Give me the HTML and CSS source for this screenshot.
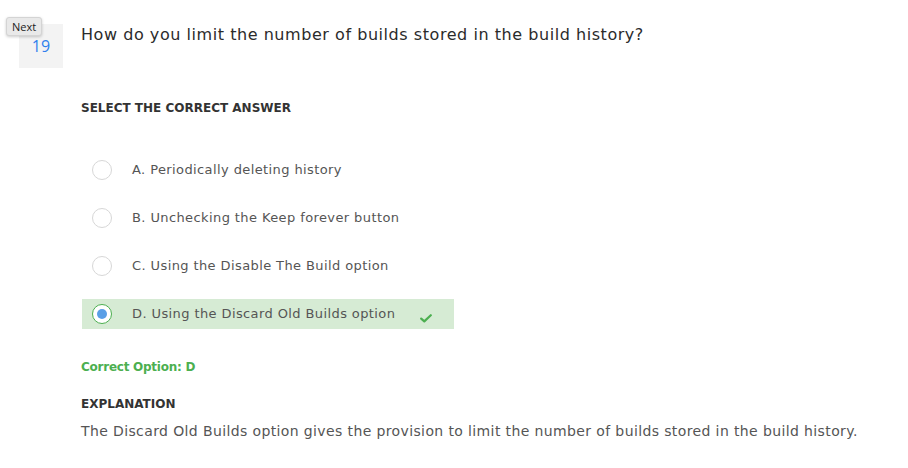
FILE: index.html
```html
<!DOCTYPE html>
<html>
<head>
<meta charset="utf-8">
<link rel="stylesheet" href="styles.css">
</head>
<body>
<div class="page">
  <div class="head">
    <div class="num">19</div>
    <div class="question">How do you limit the number of builds stored in the build history?</div>
    <div class="tip">Next</div>
  </div>
  <div class="body">
    <div class="label">SELECT THE CORRECT ANSWER</div>
    <div class="options">
      <div class="opt"><span class="radio"></span><span class="otext">A. Periodically deleting history</span></div>
      <div class="opt"><span class="radio"></span><span class="otext">B. Unchecking the Keep forever button</span></div>
      <div class="opt"><span class="radio"></span><span class="otext">C. Using the Disable The Build option</span></div>
      <div class="opt correct"><span class="radio on"></span><span class="otext">D. Using the Discard Old Builds option</span>
        <svg class="check" width="12" height="9" viewBox="0 0 12 9"><path d="M1.2 4.6 L4.3 7.4 L10.8 1.2" fill="none" stroke="#4caf50" stroke-width="2.2" stroke-linecap="round" stroke-linejoin="round"/></svg>
      </div>
    </div>
    <div class="answer">Correct Option: D</div>
    <div class="label expl">EXPLANATION</div>
    <div class="explain">The Discard Old Builds option gives the provision to limit the number of builds stored in the build history.</div>
  </div>
</div>
</body>
</html>
```
FILE: styles.css
```css
html, body {
  margin: 0;
  background: #fff;
}
body {
  font-family: "DejaVu Sans", "Liberation Sans", sans-serif;
  color: #333;
}
.page {
  padding-top: 24px;
}
.head {
  position: relative;
  display: flex;
  align-items: flex-start;
  padding-left: 19px;
  gap: 18px;
}
.num {
  width: 44px;
  height: 44px;
  background: #f3f3f3;
  color: #2f80ed;
  font-family: "Open Sans", sans-serif;
  font-size: 16px;
  display: flex;
  align-items: center;
  justify-content: center;
  flex: none;
}
.question {
  font-size: 16px;
  line-height: 20px;
  letter-spacing: 0.55px;
  color: #2b2b2b;
  padding-top: 1px;
}
.tip {
  position: absolute;
  left: 6px;
  top: -7px;
  width: 36px;
  height: 19px;
  box-sizing: border-box;
  background: #e9e9e9;
  border: 1px solid #d4d4d4;
  border-radius: 3px;
  box-shadow: 0 1px 3px rgba(0,0,0,0.2);
  font-family: "Open Sans", sans-serif;
  font-size: 11px;
  line-height: 17px;
  text-align: center;
  color: #222;
}
.body {
  padding-left: 81px;
}
.label {
  margin-top: 32px;
  font-size: 12px;
  font-weight: 700;
  line-height: 16px;
  color: #333;
}
.options {
  margin-top: 39px;
  display: flex;
  flex-direction: column;
  gap: 18px;
}
.opt {
  position: relative;
  display: flex;
  align-items: center;
  width: 372px;
  height: 30px;
  margin-left: 1px;
  padding-left: 10px;
  box-sizing: border-box;
}
.opt.correct {
  background: #d6ebd4;
}
.radio {
  width: 20px;
  height: 20px;
  box-sizing: border-box;
  border: 1px solid #d7d7d7;
  border-radius: 50%;
  background: #fff;
  flex: none;
  display: flex;
  align-items: center;
  justify-content: center;
}
.radio.on {
  border: 1.5px solid #4caf50;
}
.radio.on::after {
  content: "";
  width: 10px;
  height: 10px;
  border-radius: 50%;
  background: #5a9fe6;
}
.otext {
  margin-left: 20px;
  font-size: 13px;
  letter-spacing: 0.4px;
  color: #555;
  position: relative;
  top: -1px;
}
.check {
  position: absolute;
  left: 338px;
  top: 15px;
}
.answer {
  margin-top: 31px;
  font-size: 12px;
  font-weight: 600;
  letter-spacing: -0.25px;
  color: #4caf50;
}
.label.expl {
  margin-top: 22px;
}
.explain {
  margin-top: 11px;
  font-size: 14px;
  letter-spacing: 0.38px;
  color: #555;
}
```
